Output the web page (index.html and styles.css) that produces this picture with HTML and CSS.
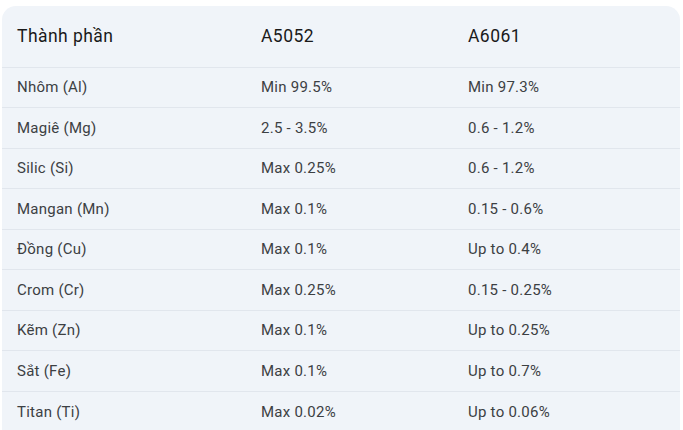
FILE: index.html
```html
<!DOCTYPE html>
<html lang="vi">
<head>
<meta charset="utf-8">
<link rel="stylesheet" href="styles.css">
</head>
<body>
<div class="card">
  <table class="tbl">
    <colgroup>
      <col class="c1"><col class="c2"><col class="c3">
    </colgroup>
    <thead>
      <tr><th>Thành phần</th><th>A5052</th><th>A6061</th></tr>
    </thead>
    <tbody>
      <tr><td>Nhôm (Al)</td><td>Min 99.5%</td><td>Min 97.3%</td></tr>
      <tr><td>Magiê (Mg)</td><td>2.5 - 3.5%</td><td>0.6 - 1.2%</td></tr>
      <tr><td>Silic (Si)</td><td>Max 0.25%</td><td>0.6 - 1.2%</td></tr>
      <tr><td>Mangan (Mn)</td><td>Max 0.1%</td><td>0.15 - 0.6%</td></tr>
      <tr><td>Đồng (Cu)</td><td>Max 0.1%</td><td>Up to 0.4%</td></tr>
      <tr><td>Crom (Cr)</td><td>Max 0.25%</td><td>0.15 - 0.25%</td></tr>
      <tr><td>Kẽm (Zn)</td><td>Max 0.1%</td><td>Up to 0.25%</td></tr>
      <tr><td>Sắt (Fe)</td><td>Max 0.1%</td><td>Up to 0.7%</td></tr>
      <tr><td>Titan (Ti)</td><td>Max 0.02%</td><td>Up to 0.06%</td></tr>
    </tbody>
  </table>
</div>
</body>
</html>
```

FILE: styles.css
```css
html, body {
  margin: 0;
  padding: 0;
  background: #ffffff;
}
body {
  padding: 6px 0 0 2px;
  font-family: Roboto, "Noto Sans", sans-serif;
  overflow: hidden;
}
.card {
  width: 678px;
  background: #f0f4f9;
  border-radius: 14px 14px 0 0;
  overflow: hidden;
}
.tbl {
  width: 100%;
  border-collapse: collapse;
  table-layout: fixed;
}
.c1 { width: 244px; }
.c2 { width: 207px; }
.c3 { width: 227px; }
th {
  text-align: left;
  font-weight: 400;
  font-size: 17.5px;
  letter-spacing: 0.45px;
  color: #1a1a1a;
  height: 61px;
  padding: 0 15px;
  box-sizing: border-box;
}
td {
  font-size: 15px;
  letter-spacing: 0.25px;
  color: #3c4043;
  height: 40.5px;
  padding: 0 15px;
  box-sizing: border-box;
  border-top: 1px solid #e1e6ed;
}
```
